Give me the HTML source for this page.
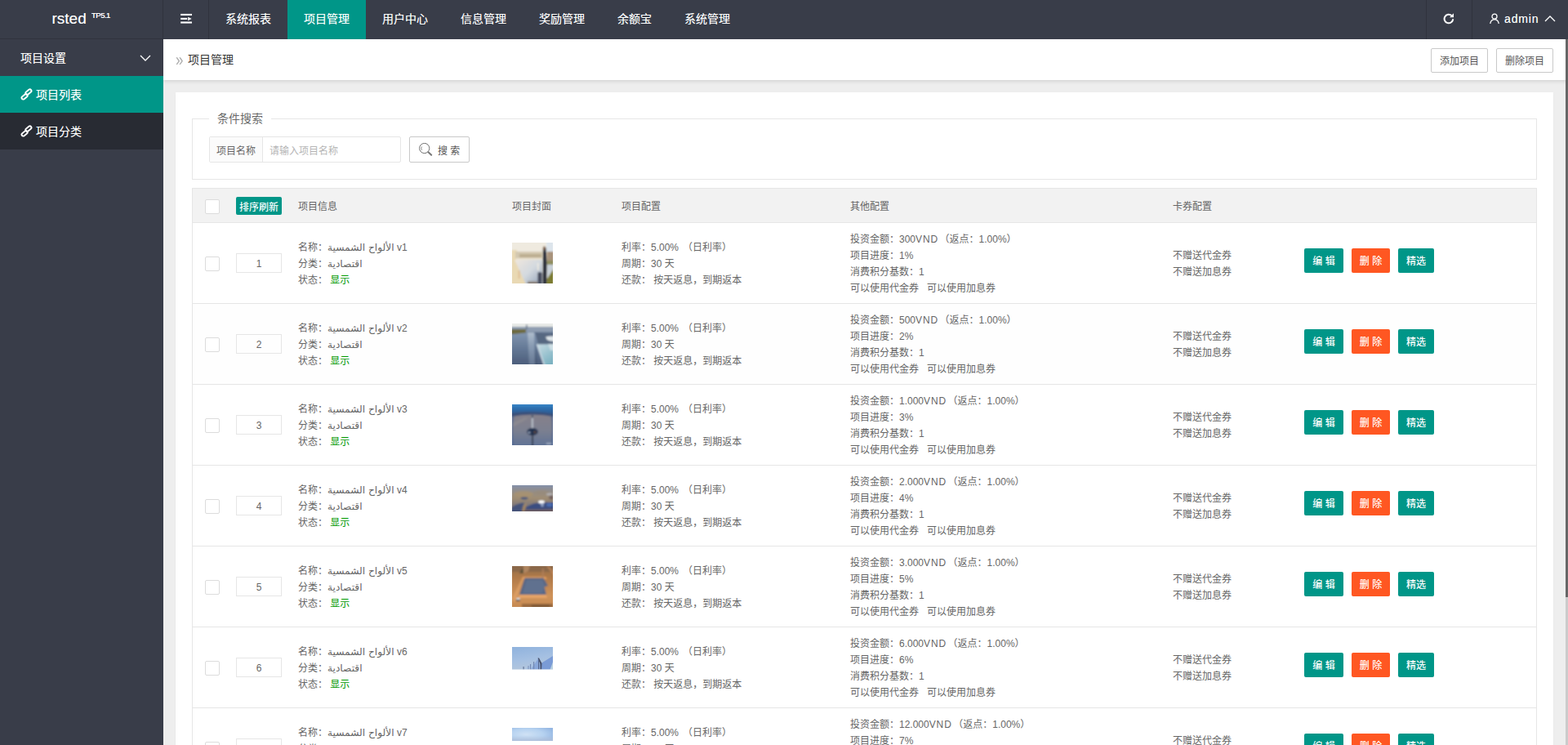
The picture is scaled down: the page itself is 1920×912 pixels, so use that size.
<!DOCTYPE html>
<html lang="zh-CN">
<head>
<meta charset="utf-8">
<title>项目管理</title>
<style>
*{box-sizing:border-box;margin:0;padding:0}
html,body{width:1920px;height:912px;overflow:hidden}
body{font-family:"Liberation Sans","Noto Sans CJK SC","DejaVu Sans",sans-serif;font-size:12px;color:#666;background:#eee;position:relative;line-height:20px}
a{text-decoration:none;color:inherit}
ul{list-style:none}

/* header */
.header{position:absolute;left:0;top:0;width:1920px;height:48px;background:#393d49;z-index:5}
.logo{position:absolute;left:0;top:0;width:200px;height:48px;border-right:1px solid #30333d;border-bottom:1px solid #30333d;color:#fff;font-size:18px;line-height:46px}
.logo span{position:absolute;left:63.5px;top:0;font-size:19px;letter-spacing:0}
.logo sup{position:absolute;left:112px;top:-4px;font-size:9.5px;font-weight:400;letter-spacing:-.5px;text-shadow:0 0 .5px #fff}
.nav{position:absolute;left:200px;top:0;height:48px;display:flex}
.nav li{height:48px;line-height:46px;padding:0 20px;color:#fff;font-size:14px;white-space:nowrap}
.nav li.ico{width:56px;padding:0;border-right:1px solid #30333d}
.nav li.ico svg{display:block}
.nav li.on{background:#009688}
.nav-r{position:absolute;right:0;top:0;height:48px;display:flex}
.nav-r li{height:48px;line-height:46px;color:#fff;font-size:14px;white-space:nowrap}
.nav-r li.refresh{width:57px;border-left:1px solid #30333d;border-right:1px solid #30333d;display:flex;align-items:center;justify-content:center}
.nav-r li.user{width:117px;position:relative}

/* side */
.side{position:absolute;left:0;top:48px;width:200px;height:864px;background:#393d49}
.side .grp{height:45px;line-height:47px;padding-left:25px;color:#fff;font-size:14px;position:relative}
.side .grp svg{position:absolute;right:15px;top:19px}
.side .it{height:45px;line-height:20px;padding:0 0 0 24.600px;color:#fff;font-size:14px;background:#282b33;display:flex;align-items:center}
.side .it.on{background:#009688}
.side .it svg{margin-right:4.400px;position:relative;top:-.5px;left:0}

/* body */
.body{position:absolute;left:200px;top:48px;width:1720px;height:864px;background:#eee;overflow:hidden}
.title{position:absolute;left:0;top:0;width:1720px;height:50px;background:#fff;box-shadow:0 1px 5px 0 rgba(0,0,0,.15);z-index:2}
.title .t{position:absolute;left:15px;top:0;line-height:50px;font-size:14px;color:#333}
.title .t i{font-style:normal;color:#adadad;font-size:17px;display:inline-block;width:15px;line-height:1;position:relative;top:1.500px;transform:scaleY(1.32);transform-origin:50% 60%}
.title .btn{position:absolute;top:11px;height:30px;width:70px;border:1px solid #c9c9c9;border-radius:2px;background:#fff;color:#555;font-size:12px;line-height:30px;text-align:center}
.card{position:absolute;left:15px;top:65px;width:1687px;height:900px;background:#fff;box-shadow:0 1px 2px 0 rgba(0,0,0,.05)}
.scroll{position:absolute;right:0;top:0;width:3px;height:864px;background:#cbcbcb;z-index:3}
.scroll b{display:block;width:3px;height:683px;background:#666}

fieldset{position:absolute;left:20px;top:22px;width:1647px;height:85px;border:1px solid #e6e6e6;border-radius:0}
legend{margin-left:20px;padding:0 10px;font-size:14px;color:#6a6a6a;line-height:20px;font-weight:400}
.ig{position:absolute;left:41px;top:54px;height:32px;width:235px;border:1px solid #e6e6e6;border-radius:2px;display:flex;background:#fff}
.ig .l{width:65px;height:30px;line-height:34px;text-align:center;background:#fbfbfb;border-right:1px solid #e6e6e6;color:#666}
.ig .p{padding-left:8px;line-height:34px;color:#b5b5b5}
.sbtn{position:absolute;left:286px;top:54px;height:32px;width:74px;border:1px solid #c9c9c9;border-radius:2px;color:#555;line-height:34px;background:#fff}
.sbtn svg{position:absolute;left:11px;top:7px}
.sbtn span{position:absolute;left:34px;top:0}

/* table */
.tbl{position:absolute;left:20px;top:117px;width:1647px;height:800px;border:1px solid #e6e6e6;border-bottom:0}
.hd{position:relative;height:42px;background:#f2f2f2;border-bottom:1px solid #e6e6e6}
.row{position:relative;height:99px;border-bottom:1px solid #e6e6e6}
.row.hv{background:#fefefe}
.c{position:absolute;white-space:nowrap}
.c div{height:20px;line-height:20px}
.hd .c{line-height:20px;top:12px}
.cb{position:absolute;left:15px;width:18px;height:18px;border:1px solid #dcdcdc;border-radius:2px;background:#fff}
.hd .cb{top:13px}
.row .cb{top:41px}
.sortb{position:absolute;left:53px;top:10px;width:56px;height:22px;line-height:26px;overflow:hidden;text-align:center;background:#009688;color:#fff;border-radius:2px}
.srt{position:absolute;left:53px;top:37px;width:56px;height:24px;border:1px solid #e6e6e6;line-height:25px;text-align:center}
.c1{left:129px}.c2{left:391px}.c3{left:525px}.c4{left:805px}.c5{left:1200px}
.row .c1,.row .c3{top:20px}
.row .c4{top:10px}
.row .c5{top:30px}
.g{color:#090}
.b,.sortb,.nav li,.nav-r li,.side .grp,.side .it,.logo span{text-shadow:0 0 .6px rgba(255,255,255,.55)}
.v{letter-spacing:.9px;margin-right:1.5px}
.sp{display:inline-block;width:1.5px}
.ar{font-family:"DejaVu Sans",sans-serif;font-size:12.2px;line-height:1}
.thumb{position:absolute;left:391px;width:50px;overflow:hidden}
.thumb svg{display:block}
.b{position:absolute;top:31px;height:30px;line-height:32px;text-align:center;border-radius:2px;color:#fff}
.b.e{left:1361px;width:48px;background:#009688}
.b.d{left:1419px;width:47px;background:#ff5722}
.b.s{left:1476px;width:44px;background:#009688}
</style>
</head>
<body>
<div class="header">
  <div class="logo"><span>rsted</span><sup>TP5.1</sup></div>
  <ul class="nav">
    <li class="ico"><svg width="55" height="48" viewBox="0 0 55 48"><g fill="#fff"><rect x="21.2" y="16.9" width="13.8" height="2.100"/><rect x="21.2" y="21.9" width="8" height="2.100"/><rect x="21.2" y="26.5" width="13.8" height="2.100"/><path d="M30.200 20.700l4.500 2.300-4.500 2.300z"/></g></svg></li>
    <li>系统报表</li>
    <li class="on">项目管理</li>
    <li>用户中心</li>
    <li>信息管理</li>
    <li>奖励管理</li>
    <li>余额宝</li>
    <li>系统管理</li>
  </ul>
  <ul class="nav-r">
    <li class="refresh"><svg style="position:relative;top:-1px;left:-1px" width="16" height="16" viewBox="0 0 16 16"><path d="M13.2 8.2a5.300 5.300 0 1 1-1.700-4.100" stroke="#fff" stroke-width="2" fill="none"/><path d="M14 1.200v5H9z" fill="#fff"/></svg></li>
    <li class="user"><svg style="position:absolute;left:20px;top:16px" width="14" height="14" viewBox="0 0 14 14"><circle cx="7" cy="4.2" r="3" stroke="#fff" stroke-width="1.3" fill="none"/><path d="M1.8 13c.4-3.4 2.6-5.2 5.2-5.2s4.800 1.800 5.200 5.200" stroke="#fff" stroke-width="1.3" fill="none"/></svg><span style="position:absolute;left:39px;top:0;letter-spacing:.85px">admin</span><svg style="position:absolute;left:88px;top:18px" width="14" height="9" viewBox="0 0 14 9"><path d="M1 8l6-6 6 6" stroke="#fff" stroke-width="1.3" fill="none"/></svg></li>
  </ul>
</div>

<div class="side">
  <div class="grp">项目设置<svg width="14" height="9" viewBox="0 0 14 9"><path d="M1 1l6 6 6-6" stroke="#fff" stroke-width="1.3" fill="none"/></svg></div>
  <div class="it on"><svg width="15" height="15" viewBox="0 0 15 15"><g fill="none" stroke="#fff" stroke-width="1.9"><rect x="5.900" y="2.700" width="8" height="3.800" rx="1.900" transform="rotate(-38 9.900 4.600)"/><rect x="1.100" y="8.500" width="8" height="3.800" rx="1.900" transform="rotate(-38 5.100 10.400)"/></g></svg>项目列表</div>
  <div class="it"><svg width="15" height="15" viewBox="0 0 15 15"><g fill="none" stroke="#fff" stroke-width="1.9"><rect x="5.900" y="2.700" width="8" height="3.800" rx="1.900" transform="rotate(-38 9.900 4.600)"/><rect x="1.100" y="8.500" width="8" height="3.800" rx="1.900" transform="rotate(-38 5.100 10.400)"/></g></svg>项目分类</div>
</div>

<div class="body">
  <div class="title">
    <div class="t"><i>»</i>项目管理</div>
    <a class="btn" style="left:1552px">添加项目</a>
    <a class="btn" style="left:1632px">删除项目</a>
  </div>
  <div class="scroll"><b></b></div>
  <div class="card">
    <fieldset><legend>条件搜索</legend></fieldset>
    <div class="ig"><div class="l">项目名称</div><div class="p">请输入项目名称</div></div>
    <div class="sbtn"><svg width="17" height="17" viewBox="0 0 17 17"><circle cx="6.700" cy="6.500" r="6.100" stroke="#6e6e6e" stroke-width="1" fill="none"/><path d="M3.400 4.600a3.800 3.800 0 0 0 .1 4.100" stroke="#777" stroke-width=".9" fill="none"/><path d="M11.500 11.300l3.700 3.500" stroke="#777" stroke-width="2" stroke-linecap="round" fill="none"/></svg><span>搜 索</span></div>
    <div class="tbl">
      <div class="hd"><span class="cb"></span><span class="sortb">排序刷新</span><div class="c c1">项目信息</div><div class="c c2">项目封面</div><div class="c c3">项目配置</div><div class="c c4">其他配置</div><div class="c c5">卡券配置</div></div>
      <div class="row"><span class="cb"></span><span class="srt">1</span><div class="c c1"><div>名称：<span class="ar">الألواح الشمسية</span> v1</div><div>分类：<span class="ar">اقتصادية</span></div><div>状态： <span class="g">显示</span></div></div><div class="thumb" style="top:24px;height:50px"><svg width="50" height="50" viewBox="0 0 50 50"><defs><filter id="f1" x="-20%" y="-20%" width="140%" height="140%"><feGaussianBlur stdDeviation="1.3"/></filter><linearGradient id="g1a" x1="0" y1="0" x2="1" y2="1"><stop offset="0" stop-color="#efe7de"/><stop offset=".5" stop-color="#d3d9df"/><stop offset="1" stop-color="#8fa0b6"/></linearGradient></defs><rect width="50" height="50" fill="#ece4d2"/><g filter="url(#f1)"><rect x="-3" y="-3" width="56" height="14" fill="#efeadf"/><rect x="42" y="-3" width="11" height="14" fill="#dde5ec"/><path d="M-3 9H6L5 21l13 32H-3z" fill="#e9d9b4"/><rect x="4" y="11" width="33" height="8" fill="#d3c8b0"/><rect x="9" y="14" width="27" height="4" fill="#bcae90"/><rect x="43" y="11" width="9" height="13" fill="#a9937b"/><rect x="43" y="22" width="9" height="6" fill="#8f8f5e"/><path d="M3 21H37V53H18z" fill="url(#g1a)"/><path d="M43 27h8v8l-8 9z" fill="#c9d1d9"/><path d="M42.500 45L51 32v20h-8.500z" fill="#7b7b30"/><rect x="7.800" y="34" width="1.600" height="10" fill="#dcb78e"/><rect x="31" y="25" width="1.800" height="9" fill="#efebe2"/><path d="M19 47.500h12v5H19z" fill="#8a8078"/><path d="M31.500 37c1.500-1.500 3.500-1.500 5 0v14h-5z" fill="#444a5a"/><path d="M37.800 7c.5-2 3.200-2 3.800 0l1.200 19-.4 25h-4.800z" fill="#2a2e3a"/><ellipse cx="39.500" cy="7" rx="1.700" ry="2.400" fill="#7a5a3c"/></g></svg></div><div class="c c3"><div>利率：5.00% <span class="sp"></span>（日利率）</div><div>周期：30 天</div><div>还款： 按天返息，到期返本</div></div><div class="c c4"><div>投资金额：300<span class="v">VND</span>（返点：1.00%）</div><div>项目进度：1%</div><div>消费积分基数：1</div><div>可以使用代金券 &nbsp; 可以使用加息券</div></div><div class="c c5"><div>不赠送代金券</div><div>不赠送加息券</div></div><a class="b e">编 辑</a><a class="b d">删 除</a><a class="b s">精选</a></div>
      <div class="row hv"><span class="cb"></span><span class="srt">2</span><div class="c c1"><div>名称：<span class="ar">الألواح الشمسية</span> v2</div><div>分类：<span class="ar">اقتصادية</span></div><div>状态： <span class="g">显示</span></div></div><div class="thumb" style="top:24px;height:50px"><svg width="50" height="50" viewBox="0 0 50 50"><defs><filter id="f2" x="-20%" y="-20%" width="140%" height="140%"><feGaussianBlur stdDeviation="1"/></filter><linearGradient id="g2a" x1="0" y1="0" x2="0" y2="1"><stop offset="0" stop-color="#8296b0"/><stop offset=".5" stop-color="#627794"/><stop offset="1" stop-color="#4a5a77"/></linearGradient><linearGradient id="g2b" x1="0" y1="0" x2=".6" y2="1"><stop offset="0" stop-color="#cadde4"/><stop offset=".6" stop-color="#97c1ce"/><stop offset="1" stop-color="#79b0c0"/></linearGradient><linearGradient id="g2c" x1="0" y1="0" x2="0" y2="1"><stop offset="0" stop-color="#b4c1cf" stop-opacity=".9"/><stop offset=".4" stop-color="#9fb0c4" stop-opacity=".6"/><stop offset="1" stop-color="#8fa1b8" stop-opacity=".35"/></linearGradient></defs><rect width="50" height="50" fill="#627794"/><g filter="url(#f2)"><rect x="-3" y="-3" width="56" height="7.500" fill="#e9ebe8"/><rect x="-3" y="4" width="56" height="6.500" fill="#8e9db1"/><rect x="17" y="1.500" width="1.600" height="6" fill="#66738a"/><rect x="-3" y="7" width="20" height="6.500" fill="#6d6b40"/><path d="M-3 13.500L20 11l12 1 21 2v39H-3z" fill="url(#g2a)"/><path d="M19 11h8l1 40h-7z" fill="url(#g2c)"/><path d="M28 11l25 1v13H32z" fill="#566781"/><path d="M41 16.500c4-1.200 8-1.200 12-.5v6c-5 0-8-1-10-2z" fill="#dfe6ea"/><path d="M30 25.500h23V53H39.500z" fill="url(#g2b)"/><path d="M44 25h9v8h-6z" fill="#e0e9ec" opacity=".7"/><path d="M30 25.500l1.200-.3L41 53h-1.500z" fill="#d6e0ea"/><path d="M29 25l-1.200 28h3z" fill="#3c4b66" opacity=".45"/></g></svg></div><div class="c c3"><div>利率：5.00% <span class="sp"></span>（日利率）</div><div>周期：30 天</div><div>还款： 按天返息，到期返本</div></div><div class="c c4"><div>投资金额：500<span class="v">VND</span>（返点：1.00%）</div><div>项目进度：2%</div><div>消费积分基数：1</div><div>可以使用代金券 &nbsp; 可以使用加息券</div></div><div class="c c5"><div>不赠送代金券</div><div>不赠送加息券</div></div><a class="b e">编 辑</a><a class="b d">删 除</a><a class="b s">精选</a></div>
      <div class="row"><span class="cb"></span><span class="srt">3</span><div class="c c1"><div>名称：<span class="ar">الألواح الشمسية</span> v3</div><div>分类：<span class="ar">اقتصادية</span></div><div>状态： <span class="g">显示</span></div></div><div class="thumb" style="top:24px;height:50px"><svg width="50" height="50" viewBox="0 0 50 50"><defs><filter id="f3" x="-20%" y="-20%" width="140%" height="140%"><feGaussianBlur stdDeviation=".9"/></filter><linearGradient id="g3a" x1="0" y1="0" x2="0" y2="1"><stop offset="0" stop-color="#4a9ad8"/><stop offset=".45" stop-color="#2c72b4"/><stop offset="1" stop-color="#31588c"/></linearGradient><linearGradient id="g3b" x1="0" y1="0" x2="0" y2="1"><stop offset="0" stop-color="#87818a"/><stop offset=".5" stop-color="#7c8090"/><stop offset="1" stop-color="#5d7196"/></linearGradient></defs><rect width="50" height="50" fill="#757d8e"/><g filter="url(#f3)"><rect x="-3" y="-3" width="56" height="15" fill="url(#g3a)"/><path d="M-3 15Q25 6 53 15v38H-3z" fill="url(#g3b)"/><path d="M-3 11.500Q25 6.500 53 12.500v3Q25 9.500 -3 15.500z" fill="#3a5078"/><path d="M-3 24L16 16l4 1L-3 30z" fill="#939092" opacity=".6"/><path d="M-3 15v38h6Q-1 30 3 14z" fill="#4f6894" opacity=".6"/><path d="M53 15v38h-6Q51 30 47 14z" fill="#4f6894" opacity=".6"/><rect x="24" y="13" width="1.800" height="18" fill="#b9c1ca"/><rect x="24" y="13" width="1.800" height="3.500" fill="#3f4c62"/><ellipse cx="25" cy="33.500" rx="6.800" ry="4.600" fill="#223250"/><ellipse cx="21" cy="34.500" rx="1.500" ry="1" fill="#aebbd2"/><ellipse cx="28" cy="34" rx="1.800" ry="1.500" fill="#5c4a40"/><rect x="24.500" y="37" width="1.400" height="16" fill="#18202f"/><rect x="42" y="47" width="6" height="2" fill="#9aa6bc"/></g></svg></div><div class="c c3"><div>利率：5.00% <span class="sp"></span>（日利率）</div><div>周期：30 天</div><div>还款： 按天返息，到期返本</div></div><div class="c c4"><div>投资金额：1.000<span class="v">VND</span>（返点：1.00%）</div><div>项目进度：3%</div><div>消费积分基数：1</div><div>可以使用代金券 &nbsp; 可以使用加息券</div></div><div class="c c5"><div>不赠送代金券</div><div>不赠送加息券</div></div><a class="b e">编 辑</a><a class="b d">删 除</a><a class="b s">精选</a></div>
      <div class="row"><span class="cb"></span><span class="srt">4</span><div class="c c1"><div>名称：<span class="ar">الألواح الشمسية</span> v4</div><div>分类：<span class="ar">اقتصادية</span></div><div>状态： <span class="g">显示</span></div></div><div class="thumb" style="top:24px;height:32px"><svg width="50" height="32" viewBox="0 0 50 32"><defs><filter id="f4" x="-20%" y="-20%" width="140%" height="140%"><feGaussianBlur stdDeviation="1.1"/></filter><linearGradient id="g4a" x1="0" y1="0" x2="0" y2="1"><stop offset="0" stop-color="#7d93ba"/><stop offset=".2" stop-color="#8e8e94"/><stop offset=".5" stop-color="#a08d72"/><stop offset=".72" stop-color="#80797a"/><stop offset="1" stop-color="#5d535c"/></linearGradient></defs><rect width="50" height="32" fill="#8b8275"/><g filter="url(#f4)"><rect x="-3" y="-3" width="56" height="38" fill="url(#g4a)"/><ellipse cx="14" cy="11" rx="12" ry="4" fill="#b09668" opacity=".55"/><ellipse cx="36" cy="9" rx="10" ry="3" fill="#9a8a78" opacity=".6"/><ellipse cx="46" cy="11" rx="4" ry="1.500" fill="#bcbcc2" opacity=".8"/><ellipse cx="48" cy="15" rx="3" ry="2.500" fill="#6a5a5c" opacity=".8"/><ellipse cx="15" cy="16" rx="4.500" ry="1.400" fill="#44557e"/><path d="M0 27Q7 21.500 15 21.500l-2 4 -2 8H-3z" fill="#44537a"/><path d="M17 27Q27 20 40 21l13 0v8L18 31z" fill="#3b4d80"/><path d="M13 32q0-6 4-10l1 1q-3 4-2 9z" fill="#ab8c60"/><ellipse cx="36" cy="20.500" rx="3.800" ry="1.900" fill="#fff"/><ellipse cx="37" cy="24" rx="1.800" ry="2.500" fill="#a9b9d6" opacity=".8"/><ellipse cx="46" cy="24" rx="4" ry="2.200" fill="#4a6cb0"/><rect x="15" y="29.500" width="38" height="5" fill="#6a5c62"/></g></svg></div><div class="c c3"><div>利率：5.00% <span class="sp"></span>（日利率）</div><div>周期：30 天</div><div>还款： 按天返息，到期返本</div></div><div class="c c4"><div>投资金额：2.000<span class="v">VND</span>（返点：1.00%）</div><div>项目进度：4%</div><div>消费积分基数：1</div><div>可以使用代金券 &nbsp; 可以使用加息券</div></div><div class="c c5"><div>不赠送代金券</div><div>不赠送加息券</div></div><a class="b e">编 辑</a><a class="b d">删 除</a><a class="b s">精选</a></div>
      <div class="row"><span class="cb"></span><span class="srt">5</span><div class="c c1"><div>名称：<span class="ar">الألواح الشمسية</span> v5</div><div>分类：<span class="ar">اقتصادية</span></div><div>状态： <span class="g">显示</span></div></div><div class="thumb" style="top:24px;height:50px"><svg width="50" height="50" viewBox="0 0 50 50"><defs><filter id="f5" x="-20%" y="-20%" width="140%" height="140%"><feGaussianBlur stdDeviation=".9"/></filter><linearGradient id="g5a" x1="0" y1="0" x2="0" y2="1"><stop offset="0" stop-color="#8f6a4c"/><stop offset=".3" stop-color="#b07a4a"/><stop offset=".7" stop-color="#d0935a"/><stop offset="1" stop-color="#c48850"/></linearGradient></defs><rect width="50" height="50" fill="#c08550"/><g filter="url(#f5)"><rect x="-3" y="-3" width="56" height="56" fill="url(#g5a)"/><rect x="-3" y="-3" width="56" height="10" fill="#8b674a"/><path d="M14 -1l8 0-2 7-6 3z" fill="#b08660"/><path d="M9 9l3-6 1.500 0 .5 6z" fill="#5e5238"/><path d="M0 40L12 15l3 0L3 45z" fill="#dfa066" opacity=".8"/><path d="M13 13h28l2 3H12z" fill="#e09c5e"/><path d="M15.500 14.500H38.500L44 24l-4.500 1.500L42 35H9z" fill="#586886"/><path d="M18 17H37l3 7-3 9H13z" fill="#60718f"/><path d="M9 35h33l1 4H8z" fill="#e6a468"/><rect x="37" y="3" width="1.600" height="11" fill="#b07f58"/><rect x="5.500" y="39" width="4" height="2" fill="#dfe4e8"/><rect x="5" y="41" width="4.500" height="2" fill="#4d4a4c"/><path d="M12 46h38v6H12z" fill="#9a6a40"/><path d="M24 47h22v4H24z" fill="#7a5636" opacity=".8"/><path d="M45 0l8 8v6L42 0z" fill="#d49460" opacity=".6"/></g></svg></div><div class="c c3"><div>利率：5.00% <span class="sp"></span>（日利率）</div><div>周期：30 天</div><div>还款： 按天返息，到期返本</div></div><div class="c c4"><div>投资金额：3.000<span class="v">VND</span>（返点：1.00%）</div><div>项目进度：5%</div><div>消费积分基数：1</div><div>可以使用代金券 &nbsp; 可以使用加息券</div></div><div class="c c5"><div>不赠送代金券</div><div>不赠送加息券</div></div><a class="b e">编 辑</a><a class="b d">删 除</a><a class="b s">精选</a></div>
      <div class="row"><span class="cb"></span><span class="srt">6</span><div class="c c1"><div>名称：<span class="ar">الألواح الشمسية</span> v6</div><div>分类：<span class="ar">اقتصادية</span></div><div>状态： <span class="g">显示</span></div></div><div class="thumb" style="top:24px;height:28px"><svg width="50" height="28" viewBox="0 0 50 28"><defs><filter id="f6" x="-20%" y="-20%" width="140%" height="140%"><feGaussianBlur stdDeviation=".7"/></filter><linearGradient id="g6a" x1="0" y1="0" x2=".3" y2="1"><stop offset="0" stop-color="#8fb2dd"/><stop offset=".6" stop-color="#a5c0e2"/><stop offset="1" stop-color="#b3c6dc"/></linearGradient></defs><rect width="50" height="28" fill="url(#g6a)"/><g filter="url(#f6)"><path d="M14 29L32 13.500 34 16 36 30z" fill="#a9c2e2"/><path d="M22 29L32 14l3 15z" fill="#8aa8da"/><path d="M34 21L50 11v19H36z" fill="#7a9bd6"/><path d="M46 29l4.500-12V30z" fill="#b8d0e0"/><path d="M31.500 13.500l1.500 0 3.500 6.500-.5 9h-1.500l0-8z" fill="#46506a"/><rect x="32" y="16" width="1.200" height="13" fill="#566890"/><rect x="26" y="18" width="1.200" height="11" fill="#7388b2"/><rect x="22" y="21" width="1.100" height="8" fill="#7388b2"/><rect x="19.500" y="23" width="1" height="6" fill="#7c90b8"/><rect x="13.500" y="24" width="1.200" height="5" fill="#64769a"/><rect x="-2" y="27.300" width="54" height="2" fill="#e4ecf4"/></g></svg></div><div class="c c3"><div>利率：5.00% <span class="sp"></span>（日利率）</div><div>周期：30 天</div><div>还款： 按天返息，到期返本</div></div><div class="c c4"><div>投资金额：6.000<span class="v">VND</span>（返点：1.00%）</div><div>项目进度：6%</div><div>消费积分基数：1</div><div>可以使用代金券 &nbsp; 可以使用加息券</div></div><div class="c c5"><div>不赠送代金券</div><div>不赠送加息券</div></div><a class="b e">编 辑</a><a class="b d">删 除</a><a class="b s">精选</a></div>
      <div class="row"><span class="cb"></span><span class="srt">7</span><div class="c c1"><div>名称：<span class="ar">الألواح الشمسية</span> v7</div><div>分类：<span class="ar">اقتصادية</span></div><div>状态： <span class="g">显示</span></div></div><div class="thumb" style="top:24px;height:16px"><svg width="50" height="16" viewBox="0 0 50 16"><defs><radialGradient id="g7a" cx=".35" cy=".5" r=".75" gradientTransform="scale(1 1)"><stop offset="0" stop-color="#cfe1f4"/><stop offset=".55" stop-color="#b6d2f0"/><stop offset="1" stop-color="#94b6e2"/></radialGradient><linearGradient id="g7b" x1="0" y1="0" x2="0" y2="1"><stop offset="0" stop-color="#b8c6dc" stop-opacity="0"/><stop offset=".6" stop-color="#b8c6dc" stop-opacity="0"/><stop offset="1" stop-color="#b0c0da" stop-opacity=".9"/></linearGradient></defs><rect width="50" height="16" fill="url(#g7a)"/><rect width="50" height="16" fill="url(#g7b)"/></svg></div><div class="c c3"><div>利率：5.00% <span class="sp"></span>（日利率）</div><div>周期：30 天</div><div>还款： 按天返息，到期返本</div></div><div class="c c4"><div>投资金额：12.000<span class="v">VND</span>（返点：1.00%）</div><div>项目进度：7%</div><div>消费积分基数：1</div><div>可以使用代金券 &nbsp; 可以使用加息券</div></div><div class="c c5"><div>不赠送代金券</div><div>不赠送加息券</div></div><a class="b e">编 辑</a><a class="b d">删 除</a><a class="b s">精选</a></div>
    </div>
  </div>
</div>
</body>
</html>
